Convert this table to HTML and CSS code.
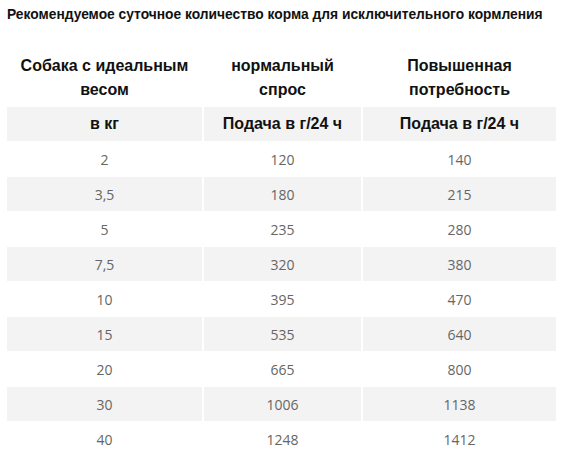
FILE: index.html
```html
<!DOCTYPE html>
<html lang="ru">
<head>
<meta charset="utf-8">
<link rel="stylesheet" href="styles.css">
</head>
<body>
<div class="page">
  <h1 class="title">Рекомендуемое суточное количество корма для исключительного кормления</h1>
  <table class="feed">
    <colgroup>
      <col class="c1"><col class="c2"><col class="c3">
    </colgroup>
    <thead>
      <tr class="head1">
        <th>Собака с идеальным<br>весом</th>
        <th>нормальный<br>спрос</th>
        <th>Повышенная<br>потребность</th>
      </tr>
      <tr class="head2 shade">
        <th>в кг</th>
        <th>Подача в г/24 ч</th>
        <th>Подача в г/24 ч</th>
      </tr>
    </thead>
    <tbody>
      <tr><td>2</td><td>120</td><td>140</td></tr>
      <tr class="shade"><td>3,5</td><td>180</td><td>215</td></tr>
      <tr><td>5</td><td>235</td><td>280</td></tr>
      <tr class="shade"><td>7,5</td><td>320</td><td>380</td></tr>
      <tr><td>10</td><td>395</td><td>470</td></tr>
      <tr class="shade"><td>15</td><td>535</td><td>640</td></tr>
      <tr><td>20</td><td>665</td><td>800</td></tr>
      <tr class="shade"><td>30</td><td>1006</td><td>1138</td></tr>
      <tr><td>40</td><td>1248</td><td>1412</td></tr>
    </tbody>
  </table>
</div>
</body>
</html>
```
FILE: styles.css
```css
html, body {
  margin: 0;
  padding: 0;
  background: #fff;
}
.page {
  padding: 7px 0 0 7px;
}
.title {
  margin: 0;
  font-family: "Liberation Sans", Arial, sans-serif;
  font-weight: bold;
  font-size: 13.8px;
  line-height: 15px;
  color: #111;
  white-space: nowrap;
}
.feed {
  margin-top: 27px;
  border-collapse: separate;
  border-spacing: 0 1px;
  table-layout: fixed;
  width: 549px;
}
.c1 { width: 195px; }
.c2 { width: 159px; }
.c3 { width: 195px; }
.feed th, .feed td {
  text-align: center;
  vertical-align: middle;
  padding: 0;
}
.feed th + th, .feed td + td {
  border-left: 2px solid #fff;
}
.feed th {
  font-family: "Liberation Sans", Arial, sans-serif;
  font-weight: bold;
  font-size: 16px;
  color: #111;
}
.head1 th {
  line-height: 24px;
  padding: 4px 0 4px;
}
.head2 th {
  height: 34px;
}
.feed td {
  height: 34px;
  font-family: "Open Sans", sans-serif;
  font-size: 14px;
  color: #666;
}
.shade th, .shade td {
  background: #f3f3f3;
}
```
